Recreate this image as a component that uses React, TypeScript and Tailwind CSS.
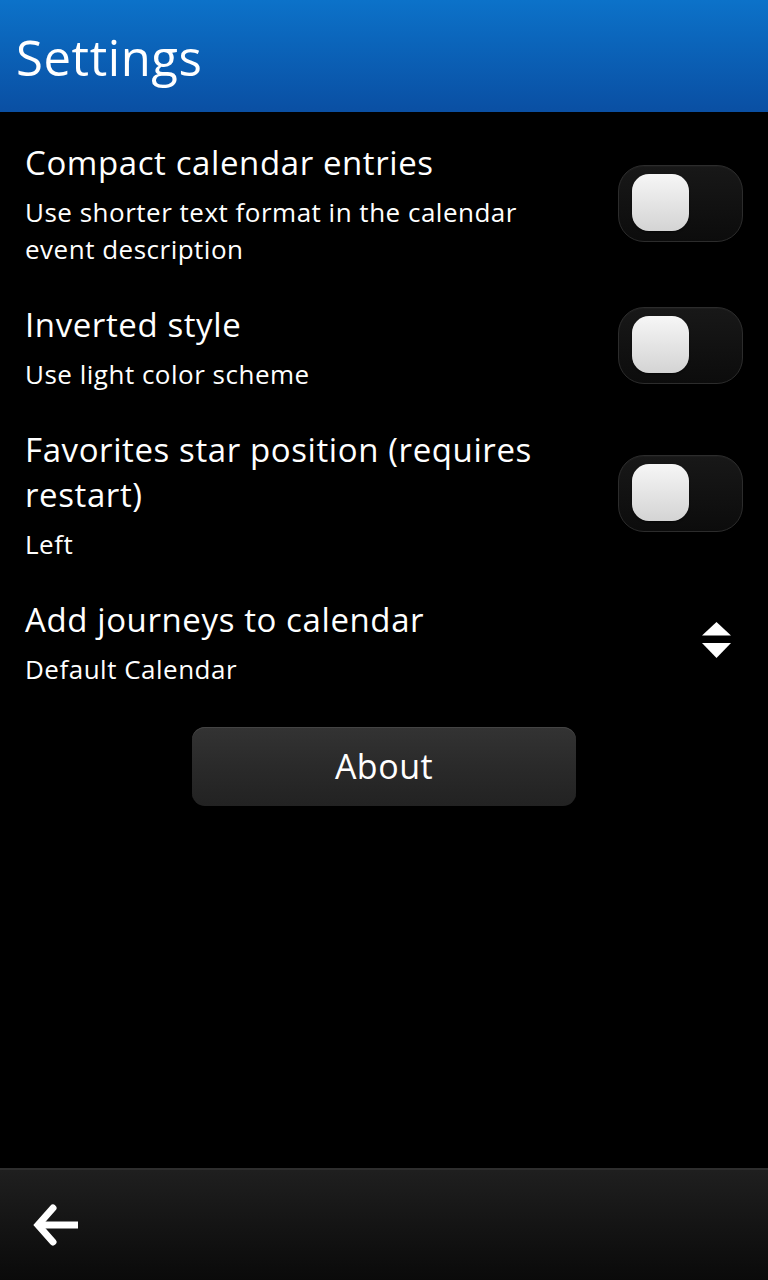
import React, { useState } from 'react';

const font = { fontFamily: '"Open Sans", "Noto Sans", sans-serif' };

const Toggle: React.FC<{ on: boolean; onChange: () => void }> = ({ on, onChange }) => (
    <button
        onClick={onChange}
        className="relative w-[125px] h-[77px] rounded-[26px] bg-gradient-to-b from-[#181818] to-[#0c0c0c] border border-[#2c2c2c] shrink-0"
        style={{ boxShadow: 'inset 0 1px 0 #1d1d1d' }}
    >
        <span
            className={`absolute top-[8px] w-[57px] h-[57px] rounded-[17px] bg-gradient-to-b from-[#f6f6f6] to-[#d4d4d4] shadow-[0_1px_2px_rgba(0,0,0,0.6)] ${on ? 'left-[53px]' : 'left-[13px]'}`}
        />
    </button>
);

const UpDown = () => (
    <svg width="29" height="36" viewBox="0 0 29 36" className="shrink-0 mr-[12px]">
        <polygon points="14.5,0 29,13.5 0,13.5" fill="white" />
        <polygon points="0,21 29,21 14.5,36" fill="white" />
    </svg>
);

const Row: React.FC<{ title: React.ReactNode; sub: string; control: React.ReactNode; ctrlShift?: string }> = ({ title, sub, control, ctrlShift }) => (
    <div className="flex items-center justify-between">
        <div className="max-w-[548px]">
            <div className="text-[33px] leading-[45px] tracking-[0.6px] text-white">{title}</div>
            <div className="text-[26px] leading-[37px] tracking-[0.5px] text-white mt-[9px]">{sub}</div>
        </div>
        <div className={ctrlShift}>{control}</div>
    </div>
);

export default function App() {
    const [compact, setCompact] = useState(false);
    const [inverted, setInverted] = useState(false);
    const [starPos, setStarPos] = useState(false);

    return (
        <div className="w-[768px] h-[1280px] bg-black flex flex-col overflow-hidden" style={font}>
            <div className="h-[112px] shrink-0 bg-gradient-to-b from-[#0c72c9] to-[#0a4fa3] flex items-center px-[16px]">
                <h1 className="text-[49px] text-white leading-none tracking-[0.6px] pt-[2px]">Settings</h1>
            </div>

            <main className="flex-1 px-[25px] pt-[28px] flex flex-col gap-[34px]">
                <Row
                    title="Compact calendar entries"
                    sub="Use shorter text format in the calendar event description"
                    control={<Toggle on={compact} onChange={() => setCompact(!compact)} />}
                    ctrlShift="mt-[4px]"
                />
                <Row
                    title="Inverted style"
                    sub="Use light color scheme"
                    control={<Toggle on={inverted} onChange={() => setInverted(!inverted)} />}
                    ctrlShift="mt-[1px]"
                />
                <Row
                    title="Favorites star position (requires restart)"
                    sub="Left"
                    control={<Toggle on={starPos} onChange={() => setStarPos(!starPos)} />}
                    ctrlShift="mt-[2px]"
                />
                <Row
                    title="Add journeys to calendar"
                    sub="Default Calendar"
                    control={<UpDown />}
                    ctrlShift="-mt-[6px]"
                />
                <div className="flex justify-center mt-[5px]">
                    <button
                        className="w-[384px] h-[79px] rounded-[13px] bg-gradient-to-b from-[#333333] via-[#2a2a2a] to-[#222222] text-white text-[34px] tracking-[0.5px]"
                        style={{ boxShadow: 'inset 0 1px 0 #444' }}
                    >
                        About
                    </button>
                </div>
            </main>

            <footer className="h-[112px] shrink-0 border-t-2 border-[#2e2e2e] bg-gradient-to-b from-[#1f1f1f] to-[#0a0a0a] flex items-center px-[31px]">
                <svg width="48" height="42" viewBox="0 0 48 42" fill="none" stroke="white" strokeWidth="7" strokeLinejoin="miter">
                    <path d="M22 4 L7 21 L22 38" strokeLinecap="round" />
                    <path d="M8 21 H47" strokeLinecap="butt" />
                </svg>
            </footer>
        </div>
    );
}
